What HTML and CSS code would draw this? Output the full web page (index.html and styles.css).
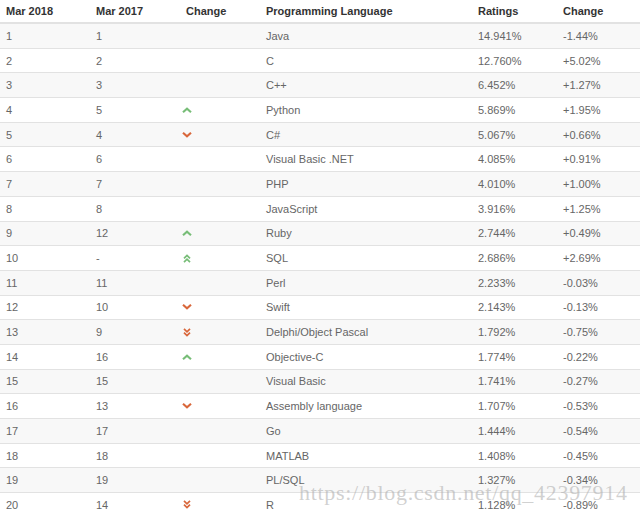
FILE: index.html
```html
<!DOCTYPE html>
<html>
<head>
<meta charset="utf-8">
<link rel="stylesheet" href="styles.css">
</head>
<body>
<div class="page">
<table class="tiobe">
  <colgroup>
    <col class="c1"><col class="c2"><col class="c3"><col class="c4"><col class="c5"><col class="c6">
  </colgroup>
  <thead>
    <tr><th>Mar 2018</th><th>Mar 2017</th><th>Change</th><th>Programming Language</th><th>Ratings</th><th>Change</th></tr>
  </thead>
  <tbody>
    <tr><td>1</td><td>1</td><td class="chg"></td><td>Java</td><td>14.941%</td><td>-1.44%</td></tr>
    <tr><td>2</td><td>2</td><td class="chg"></td><td>C</td><td>12.760%</td><td>+5.02%</td></tr>
    <tr><td>3</td><td>3</td><td class="chg"></td><td>C++</td><td>6.452%</td><td>+1.27%</td></tr>
    <tr><td>4</td><td>5</td><td class="chg"><svg class="ic up" viewBox="0 0 10 6" width="10" height="6"><path d="M1 5.2L5 1.6L9 5.2"/></svg></td><td>Python</td><td>5.869%</td><td>+1.95%</td></tr>
    <tr><td>5</td><td>4</td><td class="chg"><svg class="ic down" viewBox="0 0 10 6" width="10" height="6"><path d="M1 0.8L5 4.4L9 0.8"/></svg></td><td>C#</td><td>5.067%</td><td>+0.66%</td></tr>
    <tr><td>6</td><td>6</td><td class="chg"></td><td>Visual Basic .NET</td><td>4.085%</td><td>+0.91%</td></tr>
    <tr><td>7</td><td>7</td><td class="chg"></td><td>PHP</td><td>4.010%</td><td>+1.00%</td></tr>
    <tr><td>8</td><td>8</td><td class="chg"></td><td>JavaScript</td><td>3.916%</td><td>+1.25%</td></tr>
    <tr><td>9</td><td>12</td><td class="chg"><svg class="ic up" viewBox="0 0 10 6" width="10" height="6"><path d="M1 5.2L5 1.6L9 5.2"/></svg></td><td>Ruby</td><td>2.744%</td><td>+0.49%</td></tr>
    <tr><td>10</td><td>-</td><td class="chg"><svg class="ic up dbl" viewBox="0 0 8 9" width="8" height="9"><path d="M1 4.4L4 1.4L7 4.4M1 8.2L4 5.2L7 8.2"/></svg></td><td>SQL</td><td>2.686%</td><td>+2.69%</td></tr>
    <tr><td>11</td><td>11</td><td class="chg"></td><td>Perl</td><td>2.233%</td><td>-0.03%</td></tr>
    <tr><td>12</td><td>10</td><td class="chg"><svg class="ic down" viewBox="0 0 10 6" width="10" height="6"><path d="M1 0.8L5 4.4L9 0.8"/></svg></td><td>Swift</td><td>2.143%</td><td>-0.13%</td></tr>
    <tr><td>13</td><td>9</td><td class="chg"><svg class="ic down dbl" viewBox="0 0 8 9" width="8" height="9"><path d="M1 0.8L4 3.8L7 0.8M1 4.6L4 7.6L7 4.6"/></svg></td><td>Delphi/Object Pascal</td><td>1.792%</td><td>-0.75%</td></tr>
    <tr><td>14</td><td>16</td><td class="chg"><svg class="ic up" viewBox="0 0 10 6" width="10" height="6"><path d="M1 5.2L5 1.6L9 5.2"/></svg></td><td>Objective-C</td><td>1.774%</td><td>-0.22%</td></tr>
    <tr><td>15</td><td>15</td><td class="chg"></td><td>Visual Basic</td><td>1.741%</td><td>-0.27%</td></tr>
    <tr><td>16</td><td>13</td><td class="chg"><svg class="ic down" viewBox="0 0 10 6" width="10" height="6"><path d="M1 0.8L5 4.4L9 0.8"/></svg></td><td>Assembly language</td><td>1.707%</td><td>-0.53%</td></tr>
    <tr><td>17</td><td>17</td><td class="chg"></td><td>Go</td><td>1.444%</td><td>-0.54%</td></tr>
    <tr><td>18</td><td>18</td><td class="chg"></td><td>MATLAB</td><td>1.408%</td><td>-0.45%</td></tr>
    <tr><td>19</td><td>19</td><td class="chg"></td><td>PL/SQL</td><td>1.327%</td><td>-0.34%</td></tr>
    <tr><td>20</td><td>14</td><td class="chg"><svg class="ic down dbl" viewBox="0 0 8 9" width="8" height="9"><path d="M1 0.8L4 3.8L7 0.8M1 4.6L4 7.6L7 4.6"/></svg></td><td>R</td><td>1.128%</td><td>-0.89%</td></tr>
  </tbody>
</table>
<div class="watermark">https://blog.csdn.net/qq_42397914</div>
</div>
</body>
</html>
```
FILE: styles.css
```css
html, body {
  margin: 0;
  padding: 0;
  background: #ffffff;
}
.page {
  position: relative;
  width: 640px;
  height: 516px;
  overflow: hidden;
  font-family: "Liberation Sans", Arial, sans-serif;
}
.tiobe {
  width: 640px;
  border-collapse: collapse;
  table-layout: fixed;
  font-size: 11px;
}
.c1 { width: 90px; }
.c2 { width: 90px; }
.c3 { width: 80px; }
.c4 { width: 212px; }
.c5 { width: 85px; }
.c6 { width: 83px; }
.tiobe th {
  height: 22px;
  padding: 0 0 0 6px;
  text-align: left;
  font-weight: bold;
  color: #333;
  border-bottom: 2px solid #e2e2e2;
  vertical-align: middle;
}
.tiobe td {
  height: 23.7px;
  padding: 0 0 0 6px;
  color: #666;
  border-top: 1px solid #e2e2e2;
  vertical-align: middle;
  white-space: nowrap;
}
.tiobe tbody tr:nth-child(odd) td {
  background: #f8f8f8;
}
.tiobe td.chg {
  padding-left: 2px;
  line-height: 0;
}
.ic {
  display: inline-block;
  fill: none;
  stroke-width: 2.1;
}
.ic.dbl {
  stroke-width: 1.7;
  margin-left: 1px;
}
.ic.up { stroke: #77bd77; }
.ic.down { stroke: #d9673b; }
.watermark {
  position: absolute;
  left: 299px;
  top: 482px;
  font-family: "Liberation Serif", "Times New Roman", serif;
  font-size: 22px;
  line-height: 22px;
  color: rgba(170, 170, 170, 0.55);
  white-space: nowrap;
  letter-spacing: 0.7px;
}
```
